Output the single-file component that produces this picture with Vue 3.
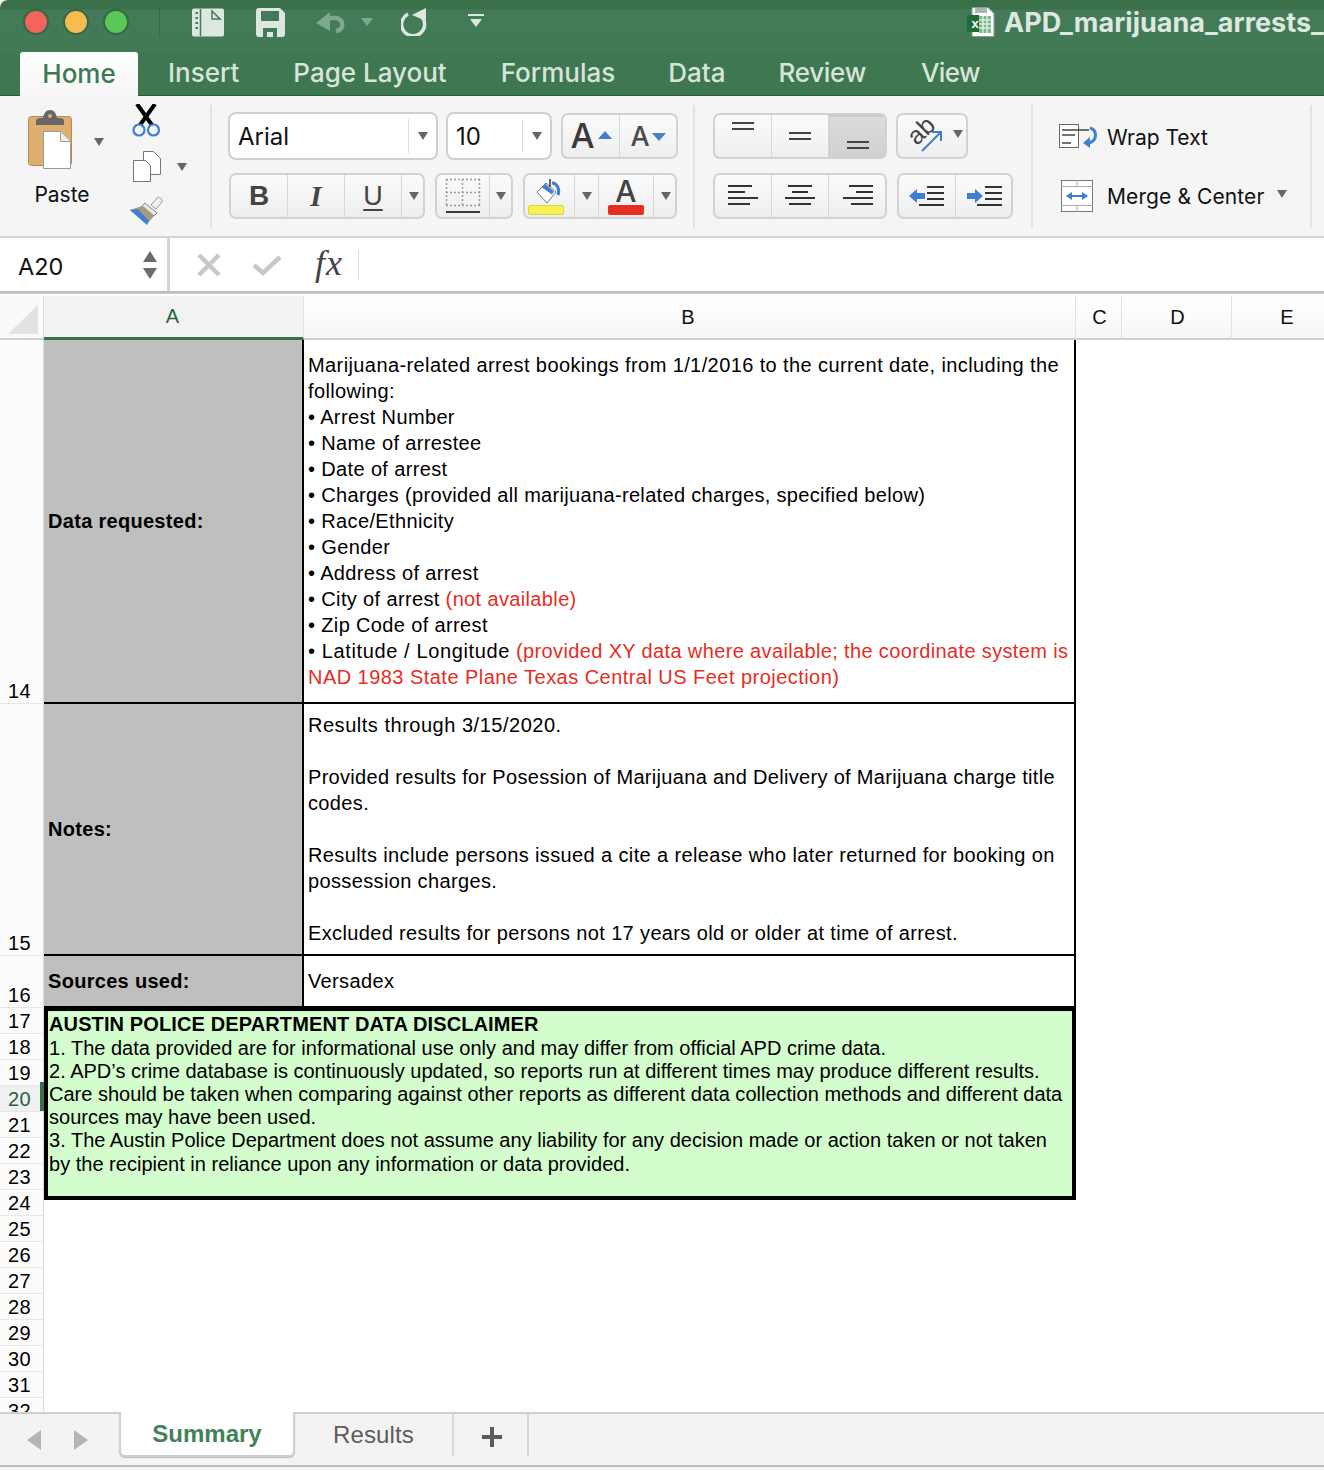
<template>
  <div class="app">
    <!-- title bar -->
    <header class="titlebar">
      <div class="dots">
        <span class="dot red"></span>
        <span class="dot yellow"></span>
        <span class="dot green"></span>
      </div>
      <span class="qa-sep"></span>
      <svg class="qa qa-side" width="32" height="29" viewBox="0 0 32 29">
        <rect width="32" height="28" y="0.500" rx="2" fill="#dbe7df"/>
        <path d="M8.500 1v27" stroke="#44795a" stroke-width="1.500"/>
        <path d="M20 3l8 8h-8z" fill="#dbe7df" stroke="#44795a" stroke-width="1.500"/>
        <rect x="3.500" y="4" width="2.500" height="2" fill="#44795a"/>
        <rect x="3.500" y="9" width="2.500" height="2" fill="#44795a"/>
        <rect x="3.500" y="14" width="2.500" height="2" fill="#44795a"/>
        <rect x="3.500" y="19" width="2.500" height="2" fill="#44795a"/>
      </svg>
      <svg class="qa qa-save" width="29" height="29" viewBox="0 0 29 29">
        <path d="M3 0h21l5 5v21a3 3 0 0 1-3 3H3a3 3 0 0 1-3-3V3a3 3 0 0 1 3-3z" fill="#dbe7df"/>
        <rect x="5" y="3" width="18" height="10" fill="#44795a"/>
        <path d="M7 29v-9h14v9h-4v-5h-6v5z" fill="#44795a"/>
      </svg>
      <svg class="qa qa-undo" width="32" height="22" viewBox="0 0 32 22">
        <path d="M10 7h9c9 0 10 12 1 13" fill="none" stroke="#7fa98f" stroke-width="4.500"/>
        <path d="M0 12L14 1v19z" fill="#7fa98f"/>
      </svg>
      <i class="qa-caret dim"></i>
      <svg class="qa qa-redo" width="28" height="28" viewBox="0 0 28 28">
        <path d="M7 6a11.500 11.500 0 1 0 14 3" fill="none" stroke="#dbe7df" stroke-width="3.500"/>
        <path d="M25 0v13L11 7z" fill="#dbe7df"/>
      </svg>
      <span class="qa-custom"><i class="qa-caret"></i></span>
      <svg class="xl-file" width="28" height="30" viewBox="0 0 28 30">
        <path d="M5 .5h16l6 6v23H5z" fill="#fff" stroke="#8d9a92"/>
        <path d="M8 1h12v5H8z" fill="#aeb5b0"/>
        <path d="M12 9h12v17H12z" fill="#7dbb8f"/>
        <path d="M12 13h12M12 17h12M12 21h12M16 9v17M20 9v17" stroke="#fff"/>
        <rect x="0" y="8" width="12" height="17" fill="#1f6b3c"/>
      </svg>
      <span class="xl-x">x</span>
      <span class="doc-name">APD_marijuana_arrests_</span>
    </header>

    <nav class="tabs">
      <span class="tab active">Home</span>
      <span class="tab t-insert">Insert</span>
      <span class="tab t-layout">Page Layout</span>
      <span class="tab t-formulas">Formulas</span>
      <span class="tab t-data">Data</span>
      <span class="tab t-review">Review</span>
      <span class="tab t-view">View</span>
    </nav>

    <!-- ribbon -->
    <section class="ribbon">
      <div class="group clip">
        <div class="paste">
          <div class="paste-top">
            <svg width="48" height="60" viewBox="0 0 48 60">
              <rect x="0.500" y="6.500" width="43" height="49" rx="3" fill="#dcae70" stroke="#b98a4c"/>
              <path d="M8 15v-4c0-2 2-3 4-3h3c1-5 3-8 7-8s6 3 7 8h3c2 0 4 1 4 3v4z" fill="#66676a"/>
              <circle cx="22" cy="6" r="2" fill="#dcae70"/>
              <path d="M15.500 21.500h17l10 10v27h-27z" fill="#fff" stroke="#9a9a9a"/>
              <path d="M32.500 21.500v10h10" fill="#eee" stroke="#9a9a9a"/>
            </svg>
            <i class="caret paste-caret"></i>
          </div>
          <span class="paste-label">Paste</span>
        </div>
        <div class="clip-tools">
          <svg width="30" height="33" viewBox="0 0 30 33">
            <path d="M5 0l15 21M23 0L8 21" stroke="#000" stroke-width="4" fill="none"/>
            <circle cx="7" cy="26" r="5.500" fill="none" stroke="#3f7fd0" stroke-width="2.200"/>
            <circle cx="21.500" cy="26" r="5.500" fill="none" stroke="#3f7fd0" stroke-width="2.200"/>
          </svg>
          <div class="copy-row">
            <svg width="28" height="31" viewBox="0 0 28 31">
              <path d="M10.500 .5h10l7 7v16h-17z" fill="#fff" stroke="#777"/>
              <path d="M.5 9.500h12l5 5v16H.5z" fill="#fff" stroke="#777"/>
            </svg>
            <i class="caret"></i>
          </div>
          <svg class="brush" width="33" height="29" viewBox="0 0 33 29">
            <path d="M21 9l6-7c2-2 6 1 5 4l-6 7z" fill="#f0f0f0" stroke="#9a9a9a"/>
            <path d="M15 7l12 10-3 3L12 10z" fill="#e4e4e4" stroke="#8a8a8a"/>
            <path d="M12 10l12 10-7 8L0 14z" fill="#a8997f"/>
            <path d="M0 14l8-1 11 12-2 4z" fill="#3f7fd0"/>
          </svg>
        </div>
      </div>

      <div class="group font">
        <div class="row">
          <div class="combo combo-font">
            <span class="combo-text">Arial</span>
            <i class="caret"></i>
          </div>
          <div class="combo combo-size">
            <span class="combo-text">10</span>
            <i class="caret"></i>
          </div>
          <div class="seg seg-size">
            <span class="cell w58"><span class="big-a">A</span><i class="tri up"></i></span>
            <span class="cell w58"><span class="small-a">A</span><i class="tri down"></i></span>
          </div>
        </div>
        <div class="row row2">
          <div class="seg seg-biu">
            <span class="cell w58 bold">B</span>
            <span class="cell w58 ital">I</span>
            <span class="cell w58 under">U</span>
            <span class="cell w23"><i class="caret"></i></span>
          </div>
          <div class="seg seg-border">
            <span class="cell w53">
              <svg width="36" height="36" viewBox="0 0 36 36">
                <path d="M1.500 1v26M17.500 1v26M34.500 1v26M1 1.500h34M1 14.500h34M1 27.500h34" stroke="#9b9b9b" stroke-width="1.500" stroke-dasharray="2 2" fill="none"/>
                <path d="M1 34h34" stroke="#3a3a3a" stroke-width="2"/>
              </svg>
            </span>
            <span class="cell w22"><i class="caret"></i></span>
          </div>
          <div class="seg seg-color">
            <span class="cell w50 stack">
              <svg class="bucket" width="26" height="28" viewBox="0 0 26 28">
                <path d="M10 6L1 15l10 11 9-11z" fill="#fff" stroke="#777"/>
                <path d="M6 10.500l3-4 9 8-2 3z" fill="#3f7fd0"/>
                <path d="M14 2v8" stroke="#333" stroke-width="1.500"/>
                <path d="M16 6c5 0 8 6 6 12" fill="none" stroke="#3f7fd0" stroke-width="3"/>
              </svg>
              <b class="bar yellow-bar"></b>
            </span>
            <span class="cell w25"><i class="caret"></i></span>
            <span class="cell w55 stack">
              <span class="color-a">A</span>
              <b class="bar red-bar"></b>
            </span>
            <span class="cell w24"><i class="caret"></i></span>
          </div>
        </div>
      </div>

      <div class="group align">
        <div class="row">
          <div class="seg seg-three">
            <span v-for="icon in vAlign" :key="icon.id" class="cell w58" :class="{ pressed: icon.on }">
              <svg width="26" height="46" viewBox="0 0 26 46"><path :d="icon.d" stroke="#444" stroke-width="2" fill="none"/></svg>
            </span>
          </div>
          <div class="seg seg-orient">
            <span class="cell w72">
              <span class="ab">ab</span>
              <svg class="ab-arrow" width="22" height="22" viewBox="0 0 22 22">
                <path d="M1 21L20 2M11 2h9v9" stroke="#3f7fd0" stroke-width="2" fill="none"/>
              </svg>
              <i class="caret orient-caret"></i>
            </span>
          </div>
        </div>
        <div class="row row2">
          <div class="seg seg-three">
            <span v-for="icon in hAlign" :key="icon.id" class="cell w58">
              <svg width="32" height="24" viewBox="0 0 32 24"><path :d="icon.d" stroke="#333" stroke-width="2" fill="none"/></svg>
            </span>
          </div>
          <div class="seg seg-indent">
            <span class="cell w58">
              <svg width="36" height="22" viewBox="0 0 36 22">
                <path d="M0 11l8-7v4h8v6H8v4z" fill="#3f7fd0"/>
                <path d="M18 2h17M18 8h17M18 14h17M10 20h25" stroke="#333" stroke-width="2"/>
              </svg>
            </span>
            <span class="cell w58">
              <svg width="36" height="22" viewBox="0 0 36 22">
                <path d="M16 11L8 4v4H0v6h8v4z" fill="#3f7fd0"/>
                <path d="M18 2h17M18 8h17M18 14h17M10 20h25" stroke="#333" stroke-width="2"/>
              </svg>
            </span>
          </div>
        </div>
      </div>

      <div class="group wrap">
        <div class="wrap-row">
          <svg class="wrap-ico" width="40" height="26" viewBox="0 0 40 26">
            <rect x="0.500" y="0.500" width="19" height="23" fill="#fff" stroke="#666"/>
            <path d="M3 6h27M3 11h13M3 19h9" stroke="#444" stroke-width="1.500"/>
            <path d="M31 4c7 2 8 12-1 15" fill="none" stroke="#3f7fd0" stroke-width="3"/>
            <path d="M24 19l7-6v11z" fill="#3f7fd0"/>
          </svg>
          <span>Wrap Text</span>
        </div>
        <div class="wrap-row merge-row">
          <svg class="merge-ico" width="32" height="32" viewBox="0 0 32 32">
            <rect x="0.500" y="0.500" width="31" height="31" fill="#fff" stroke="#777"/>
            <path d="M0 6.500h32M0 25.500h32M16 0v6M16 26v6" stroke="#aaa"/>
            <path d="M6 16h20" stroke="#3f7fd0" stroke-width="2"/>
            <path d="M5 16l6-4v8zM27 16l-6-4v8z" fill="#3f7fd0"/>
          </svg>
          <span>Merge &amp; Center</span>
          <i class="caret merge-caret"></i>
        </div>
      </div>
    </section>

    <!-- formula bar -->
    <section class="formula">
      <div class="namebox">
        <span>A20</span>
        <div class="stepper"><i class="tri-g up-g"></i><i class="tri-g down-g"></i></div>
      </div>
      <svg class="f-x" width="24" height="24" viewBox="0 0 24 24">
        <path d="M2 2l20 20M22 2L2 22" stroke="#c8c8c8" stroke-width="4.500"/>
      </svg>
      <svg class="f-check" width="30" height="22" viewBox="0 0 30 22">
        <path d="M2 11l9 8L28 3" stroke="#c8c8c8" stroke-width="4.500" fill="none"/>
      </svg>
      <span class="fx">fx</span>
      <span class="f-sep"></span>
    </section>

    <!-- column headers -->
    <div class="cols">
      <div class="corner"><i></i></div>
      <div class="col sel">A</div>
      <div class="col">B</div>
      <div class="col">C</div>
      <div class="col">D</div>
      <div class="col last">E</div>
    </div>

    <!-- sheet -->
    <main class="sheet">
      <div v-for="n in rowNums" :key="n" class="rownum" :class="{ cur: n === 20 }">{{ n }}</div>

      <div class="label r14">Data requested:</div>
      <div class="value req r14">
        <div v-for="(line, i) in requested" :key="i" class="ln">
          <span :class="{ lat: line.lat }">{{ line.text }}</span><span v-if="line.red" class="red-text">{{ line.red }}</span>
        </div>
      </div>

      <div class="label r15">Notes:</div>
      <div class="value notes r15">
        <div v-for="(line, i) in notes" :key="i" class="ln">{{ line || '\u00a0' }}</div>
      </div>

      <div class="label r16">Sources used:</div>
      <div class="value r16"><div class="ln">Versadex</div></div>

      <div class="disclaimer">
        <div class="d-title">AUSTIN POLICE DEPARTMENT DATA DISCLAIMER</div>
        <div v-for="(line, i) in disclaimer" :key="i" class="d-ln">{{ line }}</div>
      </div>
    </main>

    <!-- sheet tabs -->
    <footer class="sheetbar">
      <svg class="nav" width="70" height="22" viewBox="0 0 70 22">
        <path d="M14 1v20L0 11zM47 1v20l14-10z" fill="#b4b4b4"/>
      </svg>
      <span class="sheet-tab on">Summary</span>
      <span class="sheet-tab">Results</span>
      <span class="sheet-add">
        <svg width="20" height="20" viewBox="0 0 20 20"><path d="M10 0v20M0 10h20" stroke="#5c5c5c" stroke-width="4"/></svg>
      </span>
    </footer>
  </div>
</template>

<script setup>
const rowNums = [14, 15, 16, 17, 18, 19, 20, 21, 22, 23, 24, 25, 26, 27, 28, 29, 30, 31, 32]

const vAlign = [
  { id: 'top', d: 'M2 10h22M2 16h22' },
  { id: 'mid', d: 'M2 20h22M2 26h22' },
  { id: 'bot', d: 'M2 29h22M2 35h22', on: true }
]

const hAlign = [
  { id: 'left', d: 'M1 2h24M1 8h17M1 14h30M1 20h22' },
  { id: 'center', d: 'M4 2h24M8 8h16M1 14h30M5 20h22' },
  { id: 'right', d: 'M7 2h24M14 8h17M1 14h30M9 20h22' }
]

const requested = [
  { text: 'Marijuana-related arrest bookings from 1/1/2016 to the current date, including the' },
  { text: 'following:' },
  { text: '• Arrest Number' },
  { text: '• Name of arrestee' },
  { text: '• Date of arrest' },
  { text: '• Charges (provided all marijuana-related charges, specified below)' },
  { text: '• Race/Ethnicity' },
  { text: '• Gender' },
  { text: '• Address of arrest' },
  { text: '• City of arrest ', red: '(not available)' },
  { text: '• Zip Code of arrest' },
  { text: '• Latitude / Longitude ', red: '(provided XY data where available; the coordinate system is', lat: true },
  { text: '', red: 'NAD 1983 State Plane Texas Central US Feet projection)' }
]

const notes = [
  'Results through 3/15/2020.',
  '',
  'Provided results for Posession of Marijuana and Delivery of Marijuana charge title',
  'codes.',
  '',
  'Results include persons issued a cite a release who later returned for booking on',
  'possession charges.',
  '',
  'Excluded results for persons not 17 years old or older at time of arrest.'
]

const disclaimer = [
  '1. The data provided are for informational use only and may differ from official APD crime data.',
  '2. APD’s crime database is continuously updated, so reports run at different times may produce different results.',
  'Care should be taken when comparing against other reports as different data collection methods and different data',
  'sources may have been used.',
  '3. The Austin Police Department does not assume any liability for any decision made or action taken or not taken',
  'by the recipient in reliance upon any information or data provided.'
]
</script>

<style scoped>
.app {
  width: 1324px;
  height: 1470px;
  overflow: hidden;
  display: flex;
  flex-direction: column;
  background: #fff;
  font-family: Inter, "Noto Sans", sans-serif;
  color: #111;
}

/* title bar */
.titlebar {
  height: 52px;
  flex: none;
  display: flex;
  align-items: center;
  padding-bottom: 8px;
  box-sizing: border-box;
  background: linear-gradient(#3a7049 0, #3a7049 9px, #447a58 10px, #417a55 100%);
  border-top-left-radius: 8px;
  white-space: nowrap;
  overflow: hidden;
}
.dots { display: flex; gap: 14px; margin-left: 23px; }
.dot { width: 26px; height: 26px; border-radius: 50%; border: 2px solid #356746; box-sizing: border-box; }
.dot.red { background: #f2645c; }
.dot.yellow { background: #f6bc4f; }
.dot.green { background: #5ac858; }
.qa-sep { width: 1px; height: 32px; background: #376b48; margin-left: 30px; margin-right: 32px; }
.qa { flex: none; }
.qa-save { margin-left: 32px; }
.qa-undo { margin-left: 31px; }
.qa-caret {
  width: 0; height: 0; flex: none;
  border-left: 6px solid transparent;
  border-right: 6px solid transparent;
  border-top: 8px solid #dbe7df;
}
.qa-caret.dim { border-top-color: #7fa98f; margin-left: 13px; }
.qa-redo { margin-left: 28px; }
.qa-custom {
  margin-left: 39px;
  width: 16px;
  height: 14px;
  border-top: 2px solid #dbe7df;
  display: flex;
  justify-content: center;
  padding-top: 3px;
  margin-top: -3px;
  box-sizing: border-box;
}
.xl-file { margin-left: 483px; flex: none; }
.xl-x {
  color: #fff;
  font: 700 13px "Liberation Sans", sans-serif;
  margin-left: -26px;
  width: 12px;
  text-align: center;
  margin-top: 3px;
}
.doc-name {
  margin-left: 23px;
  font-size: 27px;
  font-weight: 700;
  color: #dce8e0;
  flex: none;
}

.tabs {
  height: 44px;
  flex: none;
  display: flex;
  align-items: stretch;
  padding-left: 20px;
  background: #3f7751;
  border-bottom: 1px solid #235c3a;
  box-sizing: border-box;
  font-size: 26px;
  font-weight: 500;
  color: #d7e4db;
  white-space: nowrap;
}
.tab { display: flex; align-items: center; padding-bottom: 2px; }
.tab.active {
  width: 118px;
  justify-content: center;
  background: linear-gradient(#fff, #f6f6f6);
  color: #3d7a52;
  border-radius: 3px 3px 0 0;
  margin-bottom: -1px;
}
.t-insert { margin-left: 30px; }
.t-layout { margin-left: 54px; }
.t-formulas { margin-left: 54px; }
.t-data { margin-left: 53px; }
.t-review { margin-left: 53px; letter-spacing: -0.3px; }
.t-view { margin-left: 55px; letter-spacing: -0.6px; }

/* ribbon */
.ribbon {
  height: 142px;
  flex: none;
  display: flex;
  padding-top: 9px;
  box-sizing: border-box;
  background: #f5f5f5;
  border-bottom: 2px solid #d4d4d4;
}
.group { height: 123px; flex: none; border-right: 2px solid #e3e3e3; box-sizing: border-box; }
.clip { width: 212px; display: flex; }
.paste { margin-left: 28px; width: 92px; }
.paste-top { display: flex; align-items: flex-start; margin-top: 5px; }
.paste-caret { margin-left: 18px; margin-top: 28px; }
.paste-label { display: block; width: 68px; text-align: center; font-size: 21px; margin-top: 12px; }
.clip-tools { display: flex; flex-direction: column; margin-left: 12px; gap: 14px; align-items: flex-start; margin-top: -1px; }
.copy-row { display: flex; align-items: center; gap: 16px; margin-left: 1px; }
.brush { margin-left: -2px; }

.caret {
  display: block;
  width: 0; height: 0; flex: none;
  border-left: 5px solid transparent;
  border-right: 5px solid transparent;
  border-top: 8px solid #666;
}

.font { width: 483px; padding-left: 16px; }
.align { width: 338px; padding-left: 18px; }
.row { display: flex; align-items: center; height: 48px; margin-top: 7px; gap: 9px; }
.row2 { margin-top: 12px; gap: 10px; height: 48px; }

.combo {
  height: 48px;
  background: #fff;
  border: 2px solid #cfcfcf;
  border-radius: 8px;
  box-sizing: border-box;
  display: flex;
  align-items: center;
  position: relative;
}
.combo-font { width: 210px; margin-right: -1px; }
.combo-size { width: 106px; }
.combo-text { font-size: 24px; padding-left: 8px; flex: 1; color: #111; }
.combo .caret { margin-right: 8px; }
.combo::after {
  content: "";
  position: absolute;
  right: 27px;
  top: 5px;
  bottom: 5px;
  width: 1px;
  background: #dcdcdc;
}

.seg {
  height: 46px;
  display: flex;
  border: 2px solid #d2d2d2;
  border-radius: 7px;
  background: linear-gradient(#fbfbfb, #eeeeee);
  box-sizing: border-box;
  overflow: hidden;
  flex: none;
}
.cell {
  height: 100%;
  display: flex;
  align-items: center;
  justify-content: center;
  flex: none;
  box-sizing: border-box;
  border-right: 1px solid #d8d8d8;
  position: relative;
}
.cell:last-child { border-right: none; }
.cell.pressed { background: linear-gradient(#dcdcdc, #d0d0d0); box-shadow: inset 0 1px 2px #bbb; }
.w58 { width: 57px; }
.w72 { width: 70px; }
.w23 { width: 23px; }
.w53 { width: 53px; }
.w22 { width: 21px; }
.w50 { width: 50px; }
.w25 { width: 24px; }
.w55 { width: 55px; }
.w24 { width: 23px; }
.stack { flex-direction: column; }

.seg-size { width: 117px; }
.seg-biu { width: 196px; margin-left: 1px; }
.seg-border { width: 78px; }
.seg-color { width: 154px; }
.seg-three { width: 174px; }
.seg-three .w58 { width: 57px; }
.seg-three .w58:last-child { width: 58px; }
.seg-orient { width: 72px; overflow: visible; }
.seg-indent { width: 116px; }

.big-a { font-size: 34px; font-weight: 500; color: #3a3a3a; line-height: 1; margin-left: -17px; }
.small-a { font-size: 27px; font-weight: 500; color: #4a4a4a; line-height: 1; margin-left: -17px; }
.tri { position: absolute; width: 0; height: 0; border-left: 7px solid transparent; border-right: 7px solid transparent; }
.tri.up { border-bottom: 8px solid #3f7fd0; top: 16px; right: 7px; }
.tri.down { border-top: 8px solid #4a80c8; top: 18px; right: 11px; }
.bold { font: 700 28px "Liberation Sans", sans-serif; color: #444; }
.ital { font: italic 700 29px "Liberation Serif", serif; color: #444; }
.under { font: 400 27px "Liberation Sans", sans-serif; color: #444; text-decoration: underline; text-underline-offset: 4px; text-decoration-thickness: 2px; }
.bar { display: block; width: 36px; height: 10px; border-radius: 2px; flex: none; }
.bucket { margin-right: 2px; }
.yellow-bar { background: #f8f150; border: 1px solid #dcd64a; box-sizing: border-box; margin-left: -8px; }
.red-bar { background: #e62d1f; }
.color-a { font-size: 30px; font-weight: 500; color: #444; line-height: 28px; height: 28px; }

.ab {
  font: 400 25px "Liberation Sans", sans-serif;
  color: #444;
  transform: rotate(-45deg);
  position: absolute;
  left: 9px;
  top: 1px;
}
.ab-arrow { position: absolute; left: 23px; top: 15px; }
.orient-caret { position: absolute; right: 5px; top: 15px; }

.wrap { width: 279px; padding-left: 26px; }
.wrap-row { display: flex; align-items: center; font-size: 21px; margin-top: 16px; height: 32px; }
.wrap-ico { margin-right: 8px; }
.merge-row { margin-top: 27px; letter-spacing: 0.1px; }
.merge-ico { margin-left: 2px; margin-right: 14px; }
.merge-caret { margin-left: 13px; margin-top: -4px; }

/* formula bar */
.formula {
  height: 55px;
  flex: none;
  display: flex;
  align-items: center;
  background: #fff;
  border-bottom: 2px solid #bdbdbd;
  box-sizing: border-box;
}
.namebox {
  width: 170px;
  height: 100%;
  flex: none;
  display: flex;
  align-items: center;
  justify-content: space-between;
  padding: 4px 10px 0 18px;
  box-sizing: border-box;
  border-right: 3px solid #d6d6d6;
  font-size: 23.500px;
}
.stepper { display: flex; flex-direction: column; gap: 6px; margin-top: -4px; }
.tri-g { width: 0; height: 0; border-left: 7px solid transparent; border-right: 7px solid transparent; }
.up-g { border-bottom: 11px solid #6b6b6b; }
.down-g { border-top: 11px solid #6b6b6b; }
.f-x { margin-left: 27px; flex: none; }
.f-check { margin-left: 31px; flex: none; }
.fx {
  margin-left: 33px;
  font: italic 36px "Liberation Serif", serif;
  color: #444;
  margin-top: -4px;
  width: 29px;
  letter-spacing: 1px;
}
.f-sep { width: 1px; height: 30px; background: #ddd; margin-left: 14px; }

/* column headers */
.cols {
  height: 47px;
  flex: none;
  display: flex;
  padding-top: 2px;
  box-sizing: border-box;
  font: 400 20px "Liberation Sans", sans-serif;
  border-top: 1px solid #cfcfcf;
}
.corner { width: 44px; flex: none; background: #fafafa; border-right: 1px solid #dcdcdc; box-sizing: border-box; border-bottom: 2px solid #cfcfcf; display: flex; }
.corner i {
  width: 30px;
  height: 29px;
  margin: 9px 0 0 8px;
  background: #e2e2e2;
  clip-path: polygon(100% 0, 100% 100%, 0 100%);
}
.col {
  display: flex;
  align-items: center;
  justify-content: center;
  flex: none;
  background: linear-gradient(#fff, #f6f6f6);
  border-right: 1px solid #e2e2e2;
  border-bottom: 2px solid #cfcfcf;
  box-sizing: border-box;
  width: 110px;
}
.col:nth-child(2) { width: 260px; padding-right: 2px; }
.col:nth-child(3) { width: 772px; padding-right: 3px; }
.col:nth-child(4) { width: 46px; padding-left: 2px; }
.col:nth-child(5) { padding-left: 2px; }
.col.last { border-right: none; }
.col.sel {
  background: #f2f2f2;
  color: #28633f;
  border-bottom: 3px solid #37704a;
}

/* sheet */
.sheet {
  height: 1072px;
  flex: none;
  overflow: hidden;
  display: grid;
  grid-template-columns: 44px 260px 772px 1fr;
  grid-template-rows: 364px 252px 52px repeat(16, 26px);
  font: 400 20px "Liberation Sans", sans-serif;
  color: #000;
}
.rownum {
  grid-column: 1;
  display: flex;
  align-items: flex-end;
  padding-left: 8px;
  line-height: 24px;
  box-sizing: border-box;
  background: #fbfbfb;
  border-right: 1px solid #dcdcdc;
  border-bottom: 1px solid #e6e6e6;
  position: relative;
  letter-spacing: 0.3px;
}
.rownum.cur { background: #f0f0f0; color: #28633f; }
.rownum.cur::after {
  content: "";
  position: absolute;
  right: -1px;
  top: -4px;
  bottom: 0;
  width: 4px;
  background: #37704a;
}
.label, .value {
  display: flex;
  box-sizing: border-box;
  border-bottom: 2px solid #000;
}
.label {
  grid-column: 2;
  align-items: center;
  padding-left: 4px;
  background: #bfbfbf;
  border-right: 2px solid #000;
  font-weight: 700;
  letter-spacing: 0.3px;
}
.value {
  grid-column: 3;
  flex-direction: column;
  justify-content: center;
  padding-left: 4px;
  border-right: 2px solid #000;
  letter-spacing: 0.36px;
  white-space: nowrap;
}
.r14 { grid-row: 1; }
.r15 { grid-row: 2; }
.r16 { grid-row: 3; }
.ln { line-height: 26px; height: 26px; white-space: pre; }
.lat { letter-spacing: 0.62px; }
.req .ln:first-child { letter-spacing: 0.4px; }
.req .ln:nth-child(6) { letter-spacing: 0.33px; }
.req .ln:last-child { letter-spacing: 0.46px; }
.notes .ln:first-child { letter-spacing: 0.52px; }
.notes .ln:nth-child(3) { letter-spacing: 0.31px; }
.notes .ln:nth-child(6) { letter-spacing: 0.38px; }
.red-text { color: #e62d1f; }

.disclaimer {
  grid-column: 2 / span 2;
  grid-row: 4 / span 8;
  align-self: start;
  height: 193px;
  margin-top: -1px;
  box-sizing: border-box;
  border: 4px solid #000;
  background: #d4fdcd;
  padding: 2px 0 0 1px;
  position: relative;
  white-space: nowrap;
}
.d-title { font-weight: 700; line-height: 23.500px; letter-spacing: 0.12px; }
.d-ln { line-height: 23.200px; letter-spacing: 0.01px; }

/* sheet tabs */
.sheetbar {
  height: 58px;
  flex: none;
  display: flex;
  align-items: flex-start;
  background: #f3f3f3;
  border-top: 2px solid #cfcfcf;
  box-sizing: border-box;
  position: relative;
  z-index: 1;
  font: 400 24px "Liberation Sans", sans-serif;
  white-space: nowrap;
}
.sheetbar::after {
  content: "";
  position: absolute;
  left: 0;
  right: 0;
  bottom: 3px;
  height: 2px;
  background: #bcbcbc;
}
.nav { margin: 15px 0 0 27px; flex: none; }
.sheet-tab {
  width: 159px;
  height: 42px;
  display: flex;
  align-items: center;
  justify-content: center;
  color: #5c5c5c;
  border-right: 2px solid #d8d8d8;
  flex: none;
  box-sizing: border-box;
  letter-spacing: 0.12px;
}
.sheet-tab.on {
  width: 176px;
  margin-left: 22px;
  margin-top: -2px;
  height: 45px;
  background: #fff;
  color: #3f8356;
  font-weight: 700;
  letter-spacing: 0;
  border: 2px solid #cfcfcf;
  border-top: none;
  border-radius: 0 0 6px 6px;
  box-shadow: 0 1px 1px #bbb;
}
.sheet-add {
  width: 75px;
  height: 42px;
  flex: none;
  display: flex;
  align-items: center;
  justify-content: center;
  padding: 4px 0 0 3px;
  border-right: 2px solid #d8d8d8;
  box-sizing: border-box;
}
</style>

<style>
body { background: #fff; }
</style>
